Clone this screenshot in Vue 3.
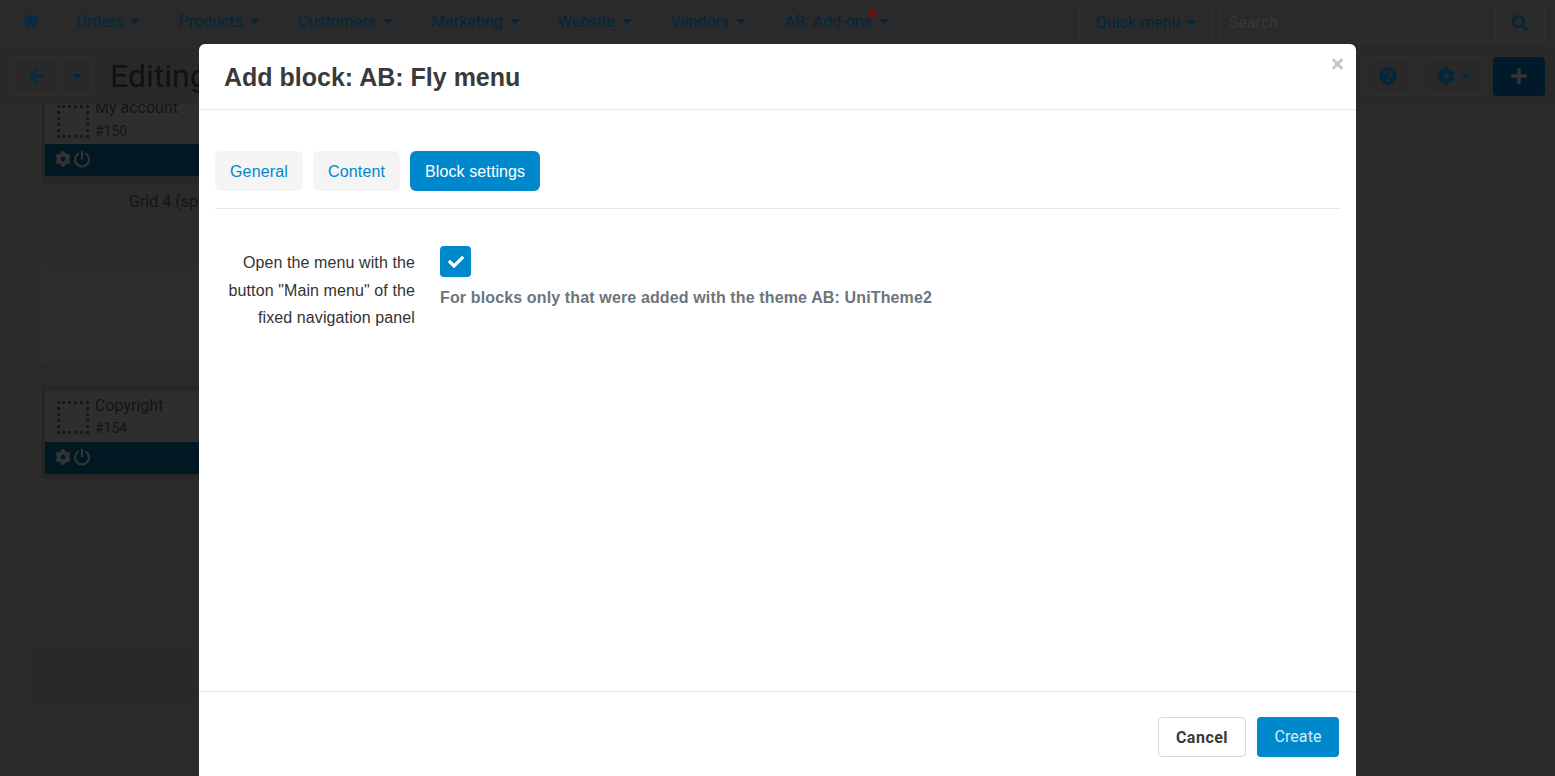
<script setup>
const navItems = ['Orders', 'Products', 'Customers', 'Marketing', 'Website', 'Vendors', 'AB: Add-ons']
const icons = {
  home: ['0 0 576 512', 'M280.37 148.26L96 300.11V464a16 16 0 0 0 16 16l112.06-.29a16 16 0 0 0 15.92-16V368a16 16 0 0 1 16-16h64a16 16 0 0 1 16 16v95.64a16 16 0 0 0 16 16.05L464 480a16 16 0 0 0 16-16V300L295.67 148.26a12.19 12.19 0 0 0-15.3 0zM571.6 251.47L488 182.56V44.05a12 12 0 0 0-12-12h-56a12 12 0 0 0-12 12v72.61L318.47 43a48 48 0 0 0-61 0L4.34 251.47a12 12 0 0 0-1.6 16.9l25.5 31A12 12 0 0 0 45.15 301l235.22-193.74a12.19 12.19 0 0 1 15.3 0L530.9 301a12 12 0 0 0 16.9-1.6l25.5-31a12 12 0 0 0-1.7-16.93z'],
  search: ['0 0 512 512', 'M505 442.7L405.3 343c-4.5-4.5-10.6-7-17-7H372c27.6-35.3 44-79.7 44-128C416 93.1 322.9 0 208 0S0 93.1 0 208s93.1 208 208 208c48.3 0 92.7-16.4 128-44v16.3c0 6.4 2.5 12.5 7 17l99.7 99.7c9.4 9.4 24.6 9.4 33.9 0l28.3-28.3c9.4-9.4 9.4-24.6.1-34zM208 336c-70.7 0-128-57.2-128-128 0-70.7 57.2-128 128-128 70.7 0 128 57.2 128 128 0 70.7-57.2 128-128 128z'],
  left: ['0 0 448 512', 'M257.5 445.1l-22.2 22.2c-9.4 9.4-24.6 9.4-33.9 0L7 273c-9.4-9.4-9.4-24.6 0-33.9L201.4 44.7c9.4-9.4 24.6-9.4 33.9 0l22.2 22.2c9.5 9.5 9.3 25-.4 34.3L136.6 216H424c13.3 0 24 10.7 24 24v32c0 13.3-10.7 24-24 24H136.6l120.5 114.8c9.8 9.3 10 24.8.4 34.3z'],
  plus: ['0 0 448 512', 'M416 208H272V64c0-17.67-14.33-32-32-32h-32c-17.67 0-32 14.33-32 32v144H32c-17.67 0-32 14.33-32 32v32c0 17.67 14.33 32 32 32h144v144c0 17.67 14.33 32 32 32h32c17.67 0 32-14.33 32-32V304h144c17.67 0 32-14.33 32-32v-32c0-17.67-14.33-32-32-32z'],
  times: ['0 0 352 512', 'M242.72 256l100.07-100.07c12.28-12.28 12.28-32.19 0-44.48l-22.24-22.24c-12.28-12.28-32.19-12.28-44.48 0L176 189.28 75.93 89.21c-12.28-12.28-32.19-12.28-44.48 0L9.21 111.45c-12.28 12.28-12.28 32.19 0 44.48L109.28 256 9.21 356.07c-12.28 12.28-12.28 32.19 0 44.48l22.24 22.24c12.28 12.28 32.2 12.28 44.48 0L176 322.72l100.07 100.07c12.28 12.28 32.2 12.28 44.48 0l22.24-22.24c12.28-12.28 12.28-32.19 0-44.48L242.72 256z'],
  help: ['0 0 512 512', 'M504 256c0 136.997-111.043 248-248 248S8 392.997 8 256C8 119.083 119.043 8 256 8s248 111.083 248 248zM262.655 90c-54.497 0-89.255 22.957-116.549 63.758-3.536 5.286-2.353 12.415 2.715 16.258l34.699 26.31c5.205 3.947 12.621 3.008 16.665-2.122 17.864-22.658 30.113-35.797 57.303-35.797 20.429 0 45.698 13.148 45.698 32.958 0 14.976-12.363 22.667-32.534 33.976C247.128 238.528 216 254.941 216 296v4c0 6.627 5.373 12 12 12h56c6.627 0 12-5.373 12-12v-1.333c0-28.462 83.186-29.647 83.186-106.667 0-58.002-60.165-102-116.531-102zM256 338c-25.365 0-46 20.635-46 46 0 25.364 20.635 46 46 46s46-20.636 46-46c0-25.365-20.635-46-46-46z'],
  cog: ['0 0 512 512', 'M487.4 315.7l-42.6-24.6c4.3-23.2 4.3-47 0-70.2l42.6-24.6c4.9-2.8 7.1-8.6 5.5-14-11.1-35.6-30-67.8-54.7-94.6-3.8-4.1-10-5.1-14.8-2.3L380.8 110c-17.9-15.4-38.5-27.3-60.8-35.1V25.8c0-5.6-3.9-10.5-9.4-11.7-36.7-8.2-74.3-7.8-109.2 0-5.5 1.2-9.4 6.1-9.4 11.7V75c-22.2 7.9-42.8 19.8-60.8 35.1L88.7 85.5c-4.9-2.8-11-1.9-14.8 2.3-24.7 26.7-43.6 58.9-54.7 94.6-1.7 5.4.6 11.2 5.5 14L67.3 221c-4.3 23.2-4.3 47 0 70.2l-42.6 24.6c-4.9 2.8-7.1 8.6-5.5 14 11.1 35.6 30 67.8 54.7 94.6 3.8 4.1 10 5.1 14.8 2.3l42.6-24.6c17.9 15.4 38.5 27.3 60.8 35.1v49.2c0 5.6 3.9 10.5 9.4 11.7 36.7 8.2 74.3 7.8 109.2 0 5.5-1.2 9.4-6.1 9.4-11.7v-49.2c22.2-7.9 42.8-19.8 60.8-35.1l42.6 24.6c4.9 2.8 11 1.9 14.8-2.3 24.7-26.7 43.6-58.9 54.7-94.6 1.5-5.5-.7-11.3-5.6-14.1zM256 336c-44.1 0-80-35.9-80-80s35.9-80 80-80 80 35.9 80 80-35.9 80-80 80z'],
  check: ['0 0 512 512', 'M173.898 439.404l-166.4-166.4c-9.997-9.997-9.997-26.206 0-36.204l36.203-36.204c9.997-9.998 26.207-9.998 36.204 0L192 312.69 432.095 72.596c9.997-9.997 26.207-9.997 36.204 0l36.203 36.204c9.997 9.997 9.997 26.206 0 36.204l-294.4 294.401c-9.998 9.997-26.207 9.997-36.204-.001z'],
}
const cards = {
  account: { name: 'My account', id: '#150' },
  copyright: { name: 'Copyright', id: '#154' },
}
</script>

<template>
  <div class="screen">
    <div class="page">
      <nav class="nav">
        <svg class="ico home" :viewBox="icons.home[0]"><path :d="icons.home[1]" /></svg>
        <ul class="menu">
          <li v-for="item in navItems" :key="item" class="menu-item">
            {{ item }}<span v-if="item === 'AB: Add-ons'" class="dot"></span><i class="caret"></i>
          </li>
        </ul>
        <div class="nav-right">
          <div class="outline quick">Quick menu<i class="caret small"></i></div>
          <div class="outline search">
            <span class="search-text">Search</span>
            <span class="search-btn"><svg class="ico s16" :viewBox="icons.search[0]"><path :d="icons.search[1]" /></svg></span>
          </div>
        </div>
      </nav>

      <header class="toolbar">
        <div class="outline group">
          <span class="g-a"><svg class="ico s18" :viewBox="icons.left[0]"><path :d="icons.left[1]" /></svg></span>
          <span class="g-b"><i class="caret flush"></i></span>
        </div>
        <h1 class="page-title">Editing</h1>
        <div class="tools">
          <div class="outline tool help"><svg class="ico s18" :viewBox="icons.help[0]"><path :d="icons.help[1]" /></svg></div>
          <div class="outline tool gear"><svg class="ico s18" :viewBox="icons.cog[0]"><path :d="icons.cog[1]" /></svg><i class="caret small"></i></div>
          <div class="add"><svg class="ico plus" :viewBox="icons.plus[0]"><path :d="icons.plus[1]" /></svg></div>
        </div>
      </header>

      <main class="content">
        <section class="grid g1">
          <article class="card clipped">
            <div class="card-top">
              <span class="dots"></span>
              <div class="card-text"><b>{{ cards.account.name }}</b><small>{{ cards.account.id }}</small></div>
            </div>
            <div class="card-bar">
              <svg class="ico bar-ic" :viewBox="icons.cog[0]"><path :d="icons.cog[1]" /></svg>
              <svg class="pow" viewBox="0 0 18 18"><path d="M5.2 3.6a7 7 0 1 0 7.6 0" /><path d="M9 1.5v7" /></svg>
            </div>
          </article>
        </section>
        <section class="grid g2"><span class="grid-name">Grid 4 (span 4)</span></section>
        <section class="grid g3"></section>
        <section class="grid g4">
          <article class="card">
            <div class="card-top">
              <span class="dots"></span>
              <div class="card-text"><b>{{ cards.copyright.name }}</b><small>{{ cards.copyright.id }}</small></div>
            </div>
            <div class="card-bar">
              <svg class="ico bar-ic" :viewBox="icons.cog[0]"><path :d="icons.cog[1]" /></svg>
              <svg class="pow" viewBox="0 0 18 18"><path d="M5.2 3.6a7 7 0 1 0 7.6 0" /><path d="M9 1.5v7" /></svg>
            </div>
          </article>
        </section>
        <section class="grid g5"></section>
        <section class="grid g6"></section>
        <section class="container-box"></section>
      </main>
    </div>

    <div class="modal">
      <div class="modal-head">
        <h2 class="modal-title">Add block: AB: Fly menu</h2>
        <svg class="close" :viewBox="icons.times[0]"><path :d="icons.times[1]" /></svg>
      </div>
      <div class="modal-body">
        <div class="tabs">
          <a class="tab">General</a>
          <a class="tab">Content</a>
          <a class="tab active">Block settings</a>
        </div>
        <div class="field">
          <label class="field-label">Open the menu with the button "Main menu" of the fixed navigation panel</label>
          <div class="field-control">
            <span class="checkbox"><svg class="ico check" :viewBox="icons.check[0]"><path :d="icons.check[1]" /></svg></span>
            <p class="hint">For blocks only that were added with the theme AB: UniTheme2</p>
          </div>
        </div>
      </div>
      <div class="modal-foot">
        <button class="btn cancel">Cancel</button>
        <button class="btn create">Create</button>
      </div>
    </div>
  </div>
</template>

<style>
html, body { margin: 0; background: #2a2a2a; overflow: hidden; }
</style>

<style scoped>
.screen { position: relative; width: 1555px; height: 776px; overflow: hidden; background: #2a2a2a; font-family: Roboto, "Liberation Sans", sans-serif; }
.page { height: 776px; display: flex; flex-direction: column; color: #03263c; }
.ico { display: block; fill: currentColor; }
.s16 { width: 16px; height: 16px; }
.s18 { width: 18px; height: 18px; }
.outline { border: 1px solid #2f2f2f; border-radius: 4px; box-sizing: border-box; }

.nav { height: 44px; display: flex; align-items: center; padding: 0 10px 1px 22px; box-sizing: border-box; flex: none; }
.home { width: 17px; height: 16px; color: #052c44; margin-top: -1px; }
.menu { display: flex; list-style: none; margin: 0 0 0 37px; padding: 0; font-size: 16px; gap: 38.2px; flex: 1; }
.menu-item { position: relative; white-space: nowrap; line-height: 20px; }
.dot { position: absolute; right: 12px; top: -3px; width: 9px; height: 9px; border-radius: 50%; background: #611414; }
.caret { display: inline-block; margin-left: 7px; vertical-align: 3px; border: 5px solid transparent; border-top-color: currentColor; border-bottom: 0; }
.caret.small { margin-left: 6px; }
.caret.flush { margin: 0; }
.nav-right { display: flex; gap: 7px; height: 40px; margin-top: 3px; }
.quick { width: 134px; display: flex; align-items: center; justify-content: center; font-size: 16px; padding-bottom: 2px; }
.search { width: 325px; display: flex; align-items: center; justify-content: space-between; }
.search-text { margin-left: 8px; color: #383838; font-size: 16px; margin-top: -2px; }
.search-btn { width: 49px; height: 100%; border-left: 1px solid #2f2f2f; display: flex; align-items: center; justify-content: center; box-sizing: border-box; }

.toolbar { height: 60px; flex: none; display: flex; align-items: center; padding: 4px 10px 0; box-sizing: border-box; background: #292929; position: relative; z-index: 1; }
.group { display: flex; width: 83px; height: 38px; }
.g-a { width: 50px; display: flex; align-items: center; justify-content: center; border-right: 1px solid #2f2f2f; color: #052c44; }
.g-b { flex: 1; display: flex; align-items: center; justify-content: center; }
.page-title { margin: 0 0 0 17px; font-size: 32px; font-weight: 400; color: #111; }
.tools { margin-left: auto; display: flex; gap: 7px; align-items: center; }
.tool { height: 38px; display: flex; align-items: center; justify-content: center; }
.help { width: 49px; padding-right: 3px; }
.gear { width: 65px; }
.add { width: 52px; height: 39px; border-radius: 4px; background: #011a2a; display: flex; align-items: center; justify-content: center; color: #333; }
.plus { width: 16px; height: 18px; }

.content { flex: 1; padding-left: 40px; display: flex; flex-direction: column; overflow: hidden; }
.grid { width: 1100px; box-sizing: border-box; border-left: 1px solid #2d2d2d; flex: none; }
.g1 { height: 79px; background: #262626; padding: 0 0 0 4px; overflow: hidden; }
.g2 { height: 65px; margin-top: 2px; padding-top: 7px; background: #2b2b2b; }
.g3 { height: 100px; margin-top: 15px; background: #2c2c2c; }
.g4 { height: 92px; margin-top: 21px; padding: 5px 0 0 4px; background: #262626; }
.g5 { height: 65px; margin-top: 3px; background: #2b2b2b; }
.g6 { height: 60px; margin-top: 17px; background: #2b2b2b; }
.container-box { width: 1200px; height: 63px; margin: 20px 0 0 -12px; border: 1px solid #2d2d2d; background: #292929; box-sizing: border-box; border-radius: 3px; flex: none; }
.grid-name { display: block; margin-left: 88px; color: #141414; font-size: 16px; line-height: 20px; white-space: nowrap; }

.card { background: #2e2e2e; border-radius: 3px; overflow: hidden; }
.card.clipped { margin-top: -6px; }
.card-top { height: 51px; display: flex; padding-left: 12px; box-sizing: border-box; }
.clipped .card-top { height: 46px; }
.dots { width: 32px; height: 33px; margin-top: 10px; border: 3px dotted #181818; box-sizing: border-box; flex: none; }
.clipped .dots { margin-top: 7px; }
.card-text { margin-left: 6px; display: flex; flex-direction: column; color: #141414; }
.card-text b { font-weight: 400; font-size: 16px; line-height: 20px; margin-top: 5px; }
.clipped .card-text b { margin-top: 0; }
.card-text small { font-size: 14px; line-height: 18px; margin-top: 3px; }
.clipped .card-text small { margin-top: 4px; }
.card-bar { height: 32px; background: #011822; display: flex; align-items: center; padding: 0 0 2px 10px; box-sizing: border-box; color: #343434; gap: 2px; }
.bar-ic { width: 16px; height: 16px; }
.pow { width: 18px; height: 18px; fill: none; stroke: currentColor; stroke-width: 2.2; stroke-linecap: round; }

.modal { position: absolute; left: 199px; top: 44px; width: 1157px; height: 760px; background: #fff; border-radius: 6px 6px 0 0; display: flex; flex-direction: column; z-index: 2; font-family: "Liberation Sans", Arial, sans-serif; color: #333; }
.modal-head { position: relative; height: 66px; border-bottom: 1px solid #e7ebef; box-sizing: border-box; padding-left: 25px; display: flex; align-items: center; flex: none; }
.modal-title { margin: 0; font-size: 25px; line-height: 30px; font-weight: 700; color: #3a3a3a; }
.close { position: absolute; right: 12px; top: 12px; width: 13px; height: 16px; fill: #c6c6c6; }
.modal-body { flex: none; height: 581px; box-sizing: border-box; padding: 41px 16px 0; }
.tabs { display: flex; gap: 10px; padding-bottom: 17px; border-bottom: 1px solid #dfe8ef; }
.tab { height: 40px; padding: 0 15px; border-radius: 6px; background: #f4f4f5; color: #0088cc; font-size: 16px; line-height: 41px; letter-spacing: 0.15px; }
.tab.active { background: #0088cc; color: #fff; letter-spacing: 0.1px; }
.field { display: flex; margin-top: 37px; }
.field-label { width: 200px; padding-top: 3px; text-align: right; font-size: 16px; line-height: 27.5px; color: #333; letter-spacing: 0.1px; }
.field-control { margin-left: 25px; }
.checkbox { width: 31px; height: 31px; background: #0088cc; border-radius: 4px; display: flex; align-items: center; justify-content: center; color: #fff; }
.check { width: 16px; height: 16px; }
.hint { margin: 12px 0 0; font-size: 16px; line-height: 18px; font-weight: 700; color: #6c757d; white-space: nowrap; letter-spacing: 0.135px; }
.modal-foot { flex: none; border-top: 1px solid #e7ebef; display: flex; justify-content: flex-end; gap: 11px; padding: 25px 17px 0 0; }
.btn { height: 40px; border-radius: 4px; font-family: Roboto, "Liberation Sans", sans-serif; font-size: 16px; box-sizing: border-box; padding: 0; }
.cancel { width: 88px; background: #fff; border: 1px solid #d2d9e0; color: #3a3a3a; font-weight: 700; letter-spacing: 0.5px; }
.create { width: 82px; background: #0088cc; border: 0; color: #d4ecf8; padding-bottom: 2px; letter-spacing: 0.1px; }
</style>
